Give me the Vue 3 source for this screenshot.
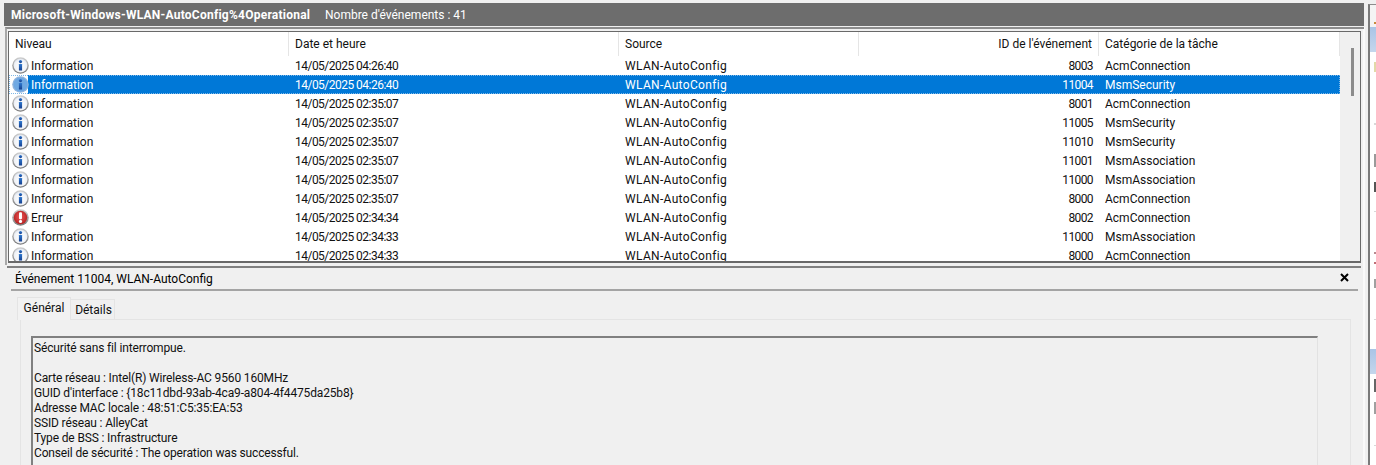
<script setup>
const columns = [
  { label: 'Niveau', cls: 'c1' },
  { label: 'Date et heure', cls: 'c2' },
  { label: 'Source', cls: 'c3' },
  { label: "ID de l'événement", cls: 'c4' },
  { label: 'Catégorie de la tâche', cls: 'c5' }
]
const rows = [
  ['Information', '14/05/2025 04:26:40', '8003', 'AcmConnection'],
  ['Information', '14/05/2025 04:26:40', '11004', 'MsmSecurity', true],
  ['Information', '14/05/2025 02:35:07', '8001', 'AcmConnection'],
  ['Information', '14/05/2025 02:35:07', '11005', 'MsmSecurity'],
  ['Information', '14/05/2025 02:35:07', '11010', 'MsmSecurity'],
  ['Information', '14/05/2025 02:35:07', '11001', 'MsmAssociation'],
  ['Information', '14/05/2025 02:35:07', '11000', 'MsmAssociation'],
  ['Information', '14/05/2025 02:35:07', '8000', 'AcmConnection'],
  ['Erreur', '14/05/2025 02:34:34', '8002', 'AcmConnection'],
  ['Information', '14/05/2025 02:34:33', '11000', 'MsmAssociation'],
  ['Information', '14/05/2025 02:34:33', '8000', 'AcmConnection']
]
const lines = [
  'Sécurité sans fil interrompue.',
  '',
  'Carte réseau : Intel(R) Wireless-AC 9560 160MHz',
  "GUID d'interface : {18c11dbd-93ab-4ca9-a804-4f4475da25b8}",
  'Adresse MAC locale : 48:51:C5:35:EA:53',
  'SSID réseau : AlleyCat',
  'Type de BSS : Infrastructure',
  'Conseil de sécurité : The operation was successful.'
]
// Clipped icons of the action pane: gap above, height and colour of each mark.
const marks = [
  { gap: 10, h: 10, c: '#e2d9a8' },
  { gap: 51, h: 2, c: '#d8d8d8' },
  { gap: 29, h: 13, c: '#9a9a9a' },
  { gap: 15, h: 10, c: '#555555' },
  { gap: 19, h: 1, c: '#d8d8d8' },
  { gap: 40, h: 2, c: '#b88a90' },
  { gap: 8, h: 2, c: '#c07078' },
  { gap: 15, h: 9, c: '#a0a0a0' },
  { gap: 31, h: 1, c: '#d8d8d8' }
]
const marksLower = [
  { gap: 5, h: 13, c: '#666666' },
  { gap: 10, h: 12, c: '#a0a0a0' },
  { gap: 31, h: 1, c: '#d8d8d8' }
]
const markStyle = (m) => ({ marginTop: m.gap + 'px', height: m.h + 'px', background: m.c })
</script>

<template>
  <div class="screen">
    <svg class="defs" width="0" height="0" aria-hidden="true">
      <defs>
        <linearGradient id="ring" x1="0" y1="0" x2="0" y2="1">
          <stop offset="0" stop-color="#cfcfcf" />
          <stop offset="1" stop-color="#7a7a7a" />
        </linearGradient>
        <radialGradient id="blueFill" cx="0.5" cy="0.55" r="0.6">
          <stop offset="0" stop-color="#ffffff" />
          <stop offset="0.7" stop-color="#f1f3f7" />
          <stop offset="1" stop-color="#d2dae6" />
        </radialGradient>
        <radialGradient id="redFill" cx="0.5" cy="0.45" r="0.6">
          <stop offset="0" stop-color="#ee5a5a" />
          <stop offset="1" stop-color="#b01c1c" />
        </radialGradient>
        <linearGradient id="iGlyph" x1="0" y1="0" x2="0" y2="1">
          <stop offset="0" stop-color="#2f79d0" />
          <stop offset="1" stop-color="#163f8e" />
        </linearGradient>
      </defs>
    </svg>

    <main class="main">
      <header class="title-bar">
        <strong class="log-name">Microsoft-Windows-WLAN-AutoConfig%4Operational</strong>
        <span class="log-count">Nombre d'événements : 41</span>
      </header>

      <section class="upper">
        <div class="list">
          <div class="list-cols">
            <div class="head">
              <div v-for="col in columns" :key="col.label" class="hcell" :class="col.cls">{{ col.label }}</div>
            </div>
            <div class="rows">
              <div v-for="(r, i) in rows" :key="i" class="row" :class="{ selected: r[4] }">
                <div class="cell c1 level">
                  <svg class="icon" width="17" height="17" viewBox="0 0 16 16">
                    <template v-if="r[0] === 'Erreur'">
                      <circle cx="8" cy="8" r="7.8" fill="url(#ring)" />
                      <circle cx="8" cy="8" r="6.3" fill="url(#redFill)" />
                      <rect x="6.6" y="3" width="2.8" height="6.6" rx="1" fill="#fff" />
                      <circle cx="8" cy="11.7" r="1.5" fill="#fff" />
                    </template>
                    <template v-else>
                      <circle cx="8" cy="8" r="7.8" :fill="r[4] ? '#8fb3dc' : 'url(#ring)'" />
                      <circle cx="8" cy="8" r="6.5" :fill="r[4] ? '#6fa8e2' : 'url(#blueFill)'" />
                      <circle cx="8" cy="4.3" r="1.5" fill="url(#iGlyph)" />
                      <rect x="6.5" y="6.6" width="3" height="6.2" rx="0.4" fill="url(#iGlyph)" />
                    </template>
                  </svg>
                  <span class="level-text">{{ r[0] }}</span>
                </div>
                <div class="cell c2 date">{{ r[1] }}</div>
                <div class="cell c3 source">WLAN-AutoConfig</div>
                <div class="cell c4 num">{{ r[2] }}</div>
                <div class="cell c5">{{ r[3] }}</div>
              </div>
            </div>
          </div>
          <div class="scrollbar"><div class="thumb"></div></div>
        </div>
      </section>

      <section class="lower">
        <div class="event-head">
          <span>Événement 11004, WLAN-AutoConfig</span>
          <svg class="close" width="9" height="9" viewBox="0 0 9 9">
            <path d="M1 1l7 7M8 1L1 8" stroke="#000" stroke-width="2" fill="none" />
          </svg>
        </div>
        <div class="divider"></div>
        <div class="tabs">
          <div class="tab active">Général</div>
          <div class="tab">Détails</div>
        </div>
        <div class="tab-body">
          <div class="message">
            <div v-for="(line, i) in lines" :key="i" class="msg-line">{{ line }}</div>
          </div>
        </div>
      </section>
    </main>

    <aside class="actions">
      <div class="act-head"><span class="act-dot"></span></div>
      <div class="act-blue"></div>
      <div class="act-marks">
        <div v-for="(m, i) in marks" :key="i" class="mark" :style="markStyle(m)"></div>
      </div>
      <div class="act-blue second"></div>
      <div class="act-marks">
        <div v-for="(m, i) in marksLower" :key="i" class="mark" :style="markStyle(m)"></div>
      </div>
    </aside>
  </div>
</template>

<style scoped>
.screen {
  display: flex;
  width: 1376px;
  height: 465px;
  overflow: hidden;
  background: #f0f0f0;
  color: #000;
  font-family: Roboto, "Liberation Sans", sans-serif;
  font-size: 12px;
}
.defs {
  position: absolute;
}
.main {
  width: 1368px;
  flex: none;
  padding: 3px 0 0 4px;
  box-sizing: border-box;
  background: linear-gradient(to right, #fafafa, #fafafa) no-repeat 1363px 27px / 2px 438px;
}
.title-bar {
  width: 1360px;
  height: 23px;
  display: flex;
  align-items: center;
  padding-left: 7px;
  box-sizing: border-box;
  background: #6d6d6d;
  color: #fff;
}
.log-name {
  font-weight: 700;
  letter-spacing: 0.24px;
  width: 314px;
  flex: none;
}
.upper {
  margin: 1px 0 0 1px;
  width: 1359px;
  height: 238px;
  box-sizing: border-box;
  border-top: 2px solid #8c8c8c;
  border-left: 2px solid #a8a8a8;
  padding: 2px 0 0 1px;
}
.list {
  display: flex;
  width: 1353px;
  height: 232px;
  box-sizing: border-box;
  border: 1px solid #696969;
  border-width: 1px 1px 2px 1px;
  background: #fff;
  overflow: hidden;
}
.list-cols {
  width: 1331px;
  flex: none;
}
.head {
  display: flex;
  height: 24px;
}
.hcell {
  line-height: 24px;
  height: 24px;
  border-right: 1px solid #e5e5e5;
  box-sizing: border-box;
  color: #111;
}
.c1 { width: 280px; padding-left: 6px; box-sizing: border-box; flex: none; }
.c2 { width: 330px; padding-left: 6px; box-sizing: border-box; flex: none; }
.c3 { width: 240px; padding-left: 6px; box-sizing: border-box; flex: none; }
.c4 { width: 240px; padding-right: 6px; text-align: right; box-sizing: border-box; flex: none; }
.c5 { width: 241px; padding-left: 6px; box-sizing: border-box; flex: none; }
.row {
  display: flex;
  height: 19px;
  line-height: 19px;
  color: #111;
}
.cell {
  height: 19px;
  padding-top: 1px;
}
.date {
  letter-spacing: -0.52px;
}
.source {
  letter-spacing: 0.33px;
}
.num {
  letter-spacing: -0.6px;
}
.level {
  display: flex;
  align-items: center;
  padding-left: 3px;
  padding-top: 0;
}
.icon {
  flex: none;
  margin-right: 2px;
  position: relative;
  z-index: 1;
}
.level-text {
  padding-top: 2px;
  line-height: 17px;
}
.row.selected {
  background: linear-gradient(to right, #fff 19px, #0078d7 19px);
  color: #fff;
  outline: 1px dotted #7fb8e8;
  outline-offset: -1px;
}
.scrollbar {
  flex: 1;
  background: #f0f0f0;
  padding: 16px 0 0 11px;
  box-sizing: border-box;
}
.thumb {
  width: 3px;
  height: 48px;
  background: #8c8c8c;
}
.lower {
  margin: 1px 0 0 3px;
  width: 1354px;
  height: 200px;
  box-sizing: border-box;
  border-top: 2px solid #808080;
  padding-left: 4px;
}
.event-head {
  display: flex;
  justify-content: space-between;
  align-items: center;
  height: 21px;
  padding: 0 12px 0 4px;
  box-sizing: border-box;
}
.close {
  margin-top: -3px;
}
.divider {
  width: 1347px;
  height: 2px;
  background: #a4a4a4;
}
.tabs {
  display: flex;
  align-items: flex-end;
  height: 28px;
  padding-left: 6px;
}
.tab {
  height: 20px;
  line-height: 20px;
  box-sizing: border-box;
  width: 44px;
  text-align: center;
  padding-left: 2px;
  border: 1px solid #e4e4e4;
  border-width: 1px 1px 0 0;
  color: #111;
}
.tab.active {
  width: 54px;
  height: 23px;
  line-height: 21px;
  padding-left: 0;
  border-width: 1px 1px 0 1px;
  background: #f2f2f2;
  position: relative;
  top: 1px;
}
.tab-body {
  margin-left: 9px;
  width: 1331px;
  height: 150px;
  box-sizing: border-box;
  border: 1px solid #e4e4e4;
  padding: 16px 0 0 10px;
}
.message {
  width: 1287px;
  height: 140px;
  box-sizing: border-box;
  border-top: 2px solid #808080;
  border-left: 2px solid #808080;
  border-right: 1px solid #e2e2e2;
  padding: 3px 0 0 1px;
}
.msg-line {
  height: 15px;
  line-height: 15px;
  white-space: pre;
  letter-spacing: -0.15px;
  color: #111;
}
.actions {
  flex: 1;
  margin-top: 4px;
  background: #fff;
  border-left: 2px solid #7a7a7a;
  border-top: 1px solid #8c8c8c;
  overflow: hidden;
}
.act-head {
  height: 22px;
  background: #f4f4f4;
  display: flex;
  align-items: flex-end;
  justify-content: flex-end;
}
.act-dot {
  width: 2px;
  height: 2px;
  margin-bottom: 3px;
  background: #c98a3c;
}
.act-blue {
  height: 25px;
  background: linear-gradient(to bottom, #a9c4e6, #c4d6ec);
}
.act-blue.second {
  margin-top: 29px;
}
.act-marks {
  display: flex;
  flex-direction: column;
  align-items: flex-end;
}
.mark {
  width: 2px;
  flex: none;
}
</style>
